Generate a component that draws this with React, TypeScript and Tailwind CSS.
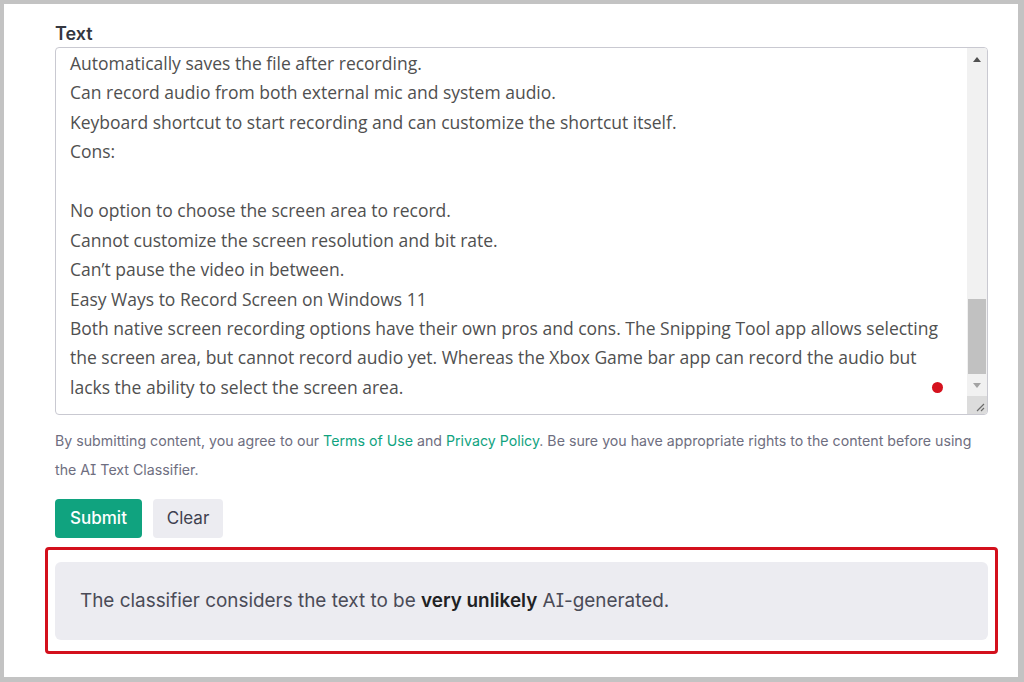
import React from "react";

const lines = [
  "Automatically saves the file after recording.",
  "Can record audio from both external mic and system audio.",
  "Keyboard shortcut to start recording and can customize the shortcut itself.",
  "Cons:",
  "",
  "No option to choose the screen area to record.",
  "Cannot customize the screen resolution and bit rate.",
  "Can\u2019t pause the video in between.",
  "Easy Ways to Record Screen on Windows 11",
  "Both native screen recording options have their own pros and cons. The Snipping Tool app allows selecting",
  "the screen area, but cannot record audio yet. Whereas the Xbox Game bar app can record the audio but",
  "lacks the ability to select the screen area.",
];

function Scrollbar() {
  return (
    <div className="flex w-[20px] flex-col">
      <div className="flex flex-1 flex-col bg-[#f1f1f1]">
        <div className="flex h-[22px] items-center justify-center">
          <svg width="8" height="5" viewBox="0 0 8 5">
            <path d="M0 5 L4 0 L8 5 Z" fill="#505050" />
          </svg>
        </div>
        <div className="flex-1" />
        <div className="mx-auto h-[75px] w-[18px] bg-[#c1c1c1]" />
        <div className="flex h-[22px] items-center justify-center">
          <svg width="8" height="5" viewBox="0 0 8 5">
            <path d="M0 0 L8 0 L4 5 Z" fill="#a3a3a3" />
          </svg>
        </div>
      </div>
      <div className="flex h-[18px] items-end justify-end bg-[#dcdcdc] p-[2px]">
        <svg width="10" height="10" viewBox="0 0 10 10">
          <path d="M9 2 L2 9 M9 6 L6 9" stroke="#6b6b6b" strokeWidth="1.2" />
        </svg>
      </div>
    </div>
  );
}

export default function App() {
  return (
    <div className="h-[682px] w-[1024px] bg-[#c3c3c3] pb-[5px] pl-[4px] pr-[6px] pt-[4px]">
      <div className="h-full w-full bg-white pl-[51px] pr-[30px] pt-[16px] font-['Inter',sans-serif]">
        <div className="text-[18px] font-semibold leading-[27px] text-[#353740]">Text</div>
        <div className="relative flex h-[368px] w-[933px] overflow-hidden rounded-[4px] border border-[#c9c9d1]">
          <div className="flex-1 pl-[14px] pt-[1px] font-['Open_Sans',sans-serif] text-[17.5px] leading-[29.45px] text-[#505050]">
            {lines.map((l, i) => (
              <div key={i} className="h-[29.45px] whitespace-nowrap">
                {l}
              </div>
            ))}
          </div>
          <Scrollbar />
          <div className="absolute left-[876px] top-[334px] h-[11px] w-[11px] rounded-full bg-[#d5121e]" />
        </div>
        <div className="mt-[11px] text-[14.2px] leading-[29px] text-[#6e6e80] [font-feature-settings:'cv08']">
          <div className="whitespace-nowrap">
            By submitting content, you agree to our <span className="text-[#10a37f]">Terms of Use</span> and{" "}
            <span className="text-[#10a37f]">Privacy Policy</span>. Be sure you have appropriate rights to the
            content before using
          </div>
          <div>the AI Text Classifier.</div>
        </div>
        <div className="mt-[15px] flex gap-[11px]">
          <button className="h-[39px] w-[87px] rounded-[4px] bg-[#10a37f] text-[17px] font-medium text-white">
            Submit
          </button>
          <button className="h-[39px] w-[70px] rounded-[4px] bg-[#ececf1] text-[17px] text-[#40414f]">
            Clear
          </button>
        </div>
        <div className="-ml-[10px] mt-[9px] w-[953px] rounded-[4px] border-[3px] border-[#d3101c] px-[7px] pb-[11px] pt-[12px]">
          <div className="flex h-[78px] items-center rounded-[6px] bg-[#ececf1] pl-[25px] text-[18.9px] text-[#4a4b57] [font-feature-settings:'cv08']">
            <span>
              The classifier considers the text to be{" "}
              <span className="font-semibold text-[#202123]">very unlikely</span> AI-generated.
            </span>
          </div>
        </div>
      </div>
    </div>
  );
}
